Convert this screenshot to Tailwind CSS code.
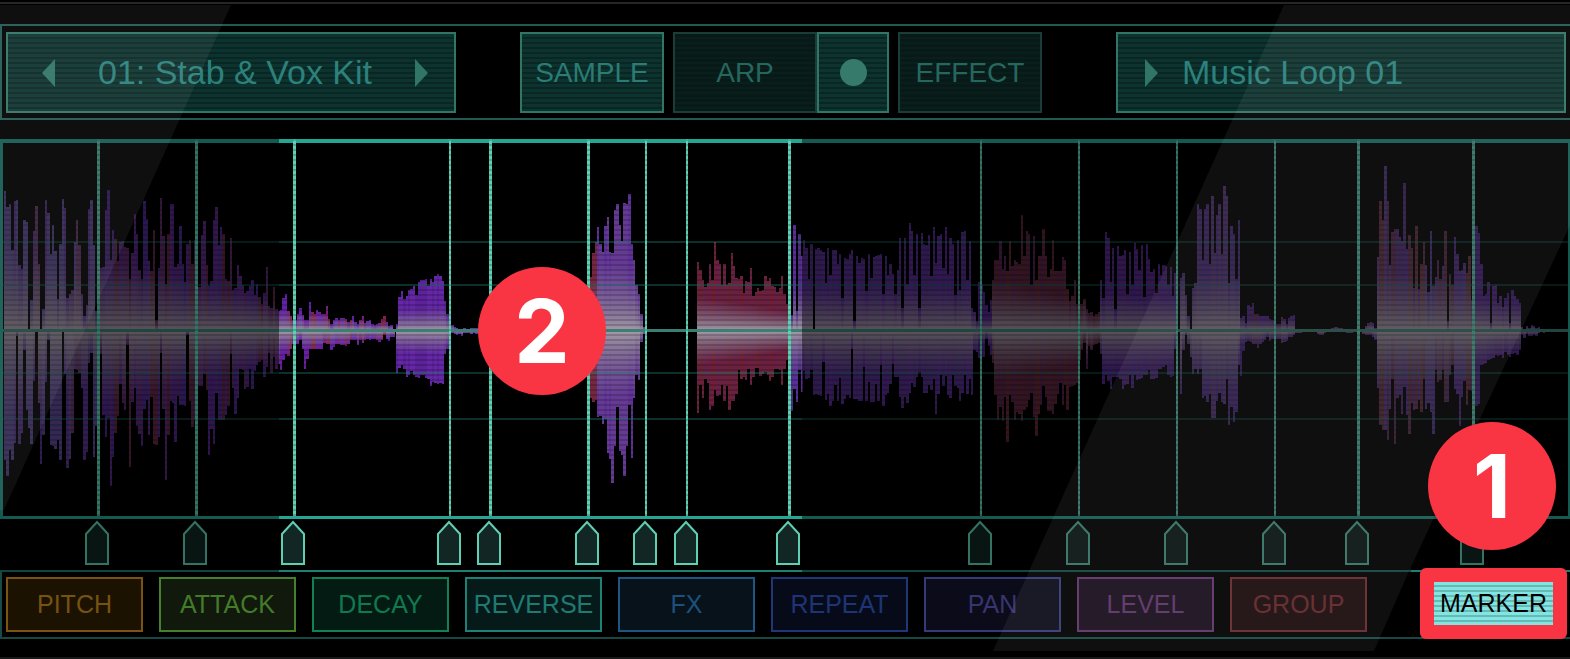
<!DOCTYPE html>
<html lang="en">
<head>
    <meta charset="UTF-8">
    <meta name="viewport" content="width=device-width, initial-scale=1.0">
    <title>Slice Editor</title>
    <script src="https://cdn.jsdelivr.net/npm/@tailwindcss/browser@4"></script>
</head>
<body class="bg-black font-['Liberation_Sans',Arial,sans-serif]">
<main class="relative flex min-h-screen flex-col overflow-hidden bg-black">
    <div class="mt-[2px] h-[2px] bg-[#262626]"></div>

    <!-- Kit, mode and sample selectors -->
    <header class="mt-5 grid grid-cols-[450fr_660fr_450fr] border-y-2 border-l-2 border-[#1f5a54] pt-1.5 pr-1 pb-[5px] pl-1">
        <div class="flex h-[81px] items-center justify-between border-2 border-[#317568] bg-[repeating-linear-gradient(#0d332e_0_3px,#0a2624_3px_5px)] pr-[26px] pl-[34px] text-[34px] text-[#2c817c]">
            <button aria-label="Previous kit"><svg class="h-7 w-[13px] fill-[#317566]" viewBox="0 0 13 28"><path d="M13 0V28L0 14z"/></svg></button>
            <span>01: Stab &amp; Vox Kit</span>
            <button aria-label="Next kit"><svg class="h-7 w-[13px] fill-[#317566]" viewBox="0 0 13 28"><path d="M0 0V28L13 14z"/></svg></button>
        </div>
        <div class="grid h-[81px] grid-cols-[153fr_144fr_81fr_144fr] pr-[74px] pl-16 text-[28px] text-[#2a7c75]">
            <button class="mr-[9px] border-2 border-[#317568] bg-[repeating-linear-gradient(#0d332e_0_3px,#0a2624_3px_5px)]">SAMPLE</button>
            <button class="border-2 border-[#1a3d38] bg-[repeating-linear-gradient(#081917_0_3px,#07201c_3px_5px)] text-[#25675f]">ARP</button>
            <button class="mr-[9px] flex items-center justify-center border-2 border-[#317568] bg-[repeating-linear-gradient(#0d332e_0_3px,#0a2624_3px_5px)]" aria-label="Arp on"><span class="size-[27px] rounded-full bg-[#357a6b]"></span></button>
            <button class="border-2 border-[#1a3d38] bg-[repeating-linear-gradient(#081917_0_3px,#07201c_3px_5px)] text-[#25675f]">EFFECT</button>
        </div>
        <div class="flex h-[81px] items-center gap-6 border-2 border-[#317568] bg-[repeating-linear-gradient(#0d332e_0_3px,#0a2624_3px_5px)] pl-[27px] text-[34px] text-[#2c817c]">
            <button aria-label="Next loop"><svg class="h-7 w-[13px] fill-[#317566]" viewBox="0 0 13 28"><path d="M0 0V28L13 14z"/></svg></button>
            <span>Music Loop 01</span>
        </div>
    </header>

    <!-- Waveform with slice markers -->
    <section class="mt-[19px]">
        <svg class="block h-[433px] w-full" viewBox="0 0 1570 433" preserveAspectRatio="none" role="img" aria-label="Waveform">
            <defs>
                <linearGradient id="fade-up" x1="0" y1="1" x2="0" y2="0">
                    <stop offset="0" stop-color="#a49aa8" stop-opacity="1"/>
                    <stop offset=".35" stop-color="#918699" stop-opacity=".65"/>
                    <stop offset="1" stop-color="#85759a" stop-opacity="0"/>
                </linearGradient>
                <linearGradient id="fade-down" x1="0" y1="0" x2="0" y2="1">
                    <stop offset="0" stop-color="#a49aa8" stop-opacity="1"/>
                    <stop offset=".35" stop-color="#918699" stop-opacity=".65"/>
                    <stop offset="1" stop-color="#85759a" stop-opacity="0"/>
                </linearGradient>
                <pattern id="scan" width="5" height="5" patternUnits="userSpaceOnUse">
                    <rect width="5" height="2" fill="#000" fill-opacity=".18"/>
                </pattern>
            </defs>
            <g id="bars" shape-rendering="crispEdges"></g>
            <rect y="4" width="1570" height="373" fill="url(#scan)"/>
            <g fill="#1f7a6b" fill-opacity=".4">
                <rect y="102" width="1570" height="2"/>
                <rect y="145" width="1570" height="2"/>
                <rect y="233" width="1570" height="2"/>
                <rect y="279" width="1570" height="2"/>
            </g>
            <rect y="190" width="1570" height="3" fill="#3a7f72"/>
            <g fill="#23a794">
                <rect width="1570" height="4"/>
                <rect y="377" width="1570" height="3"/>
                <rect width="3" height="380"/>
                <rect x="1568" width="2" height="380"/>
                <rect y="431" width="1570" height="2" fill="#1e7f75"/>
            </g>
            <g id="markers"></g>
            <rect width="279" height="433" fill="#000" fill-opacity=".45"/>
            <rect x="802" width="768" height="433" fill="#000" fill-opacity=".45"/>
            <rect x="1411" y="431" width="159" height="2" fill="#1e7f75"/>
        </svg>
    </section>

    <!-- Slice parameters -->
    <nav class="grid grid-cols-[repeat(9,137fr)_184fr] gap-4 border-b-2 border-l-2 border-[#174a45] pt-[5px] pr-[3px] pb-[5px] pl-1 text-[25px]">
        <button class="h-[55px] border-2 border-[#7a5410] bg-[#1b1202] text-[#775210]">PITCH</button>
        <button class="h-[55px] border-2 border-[#47802c] bg-[#10190b] text-[#447b2a]">ATTACK</button>
        <button class="h-[55px] border-2 border-[#128055] bg-[#031b13] text-[#117950]">DECAY</button>
        <button class="h-[55px] border-2 border-[#1f8078] bg-[#071a1a] text-[#1e7b74]">REVERSE</button>
        <button class="h-[55px] border-2 border-[#1f5583] bg-[#07121b] text-[#1d507c]">FX</button>
        <button class="h-[55px] border-2 border-[#1f3779] bg-[#070b19] text-[#1d3576]">REPEAT</button>
        <button class="h-[55px] border-2 border-[#363a78] bg-[#0c0b19] text-[#37356f]">PAN</button>
        <button class="h-[55px] border-2 border-[#5d3468] bg-[#180d1c] text-[#5b3265]">LEVEL</button>
        <button class="h-[55px] border-2 border-[#65282b] bg-[#1a0b0c] text-[#602528]">GROUP</button>
        <button class="-mt-[9px] -mb-[7px] ml-[37px] flex items-center justify-center rounded-md bg-[#fa3543] p-3.5 text-black">
            <span class="flex h-[43px] w-full items-center justify-center bg-[repeating-linear-gradient(#82e5e2_0_3px,#67b9b6_3px_5px)]">MARKER</span>
        </button>
    </nav>

    <div class="mt-auto h-[2px] bg-[#191919]"></div>

    <!-- Screen glare -->
    <svg class="pointer-events-none absolute inset-0 h-full w-full fill-white/6" viewBox="0 0 1570 659" preserveAspectRatio="none" aria-hidden="true">
        <path d="M0 5H231L4 510H0z"/>
        <path d="M1284 5H1570V225L1411 567V571H1409L1374 651H993z"/>
    </svg>

    <!-- Step callouts -->
    <div class="absolute top-[267px] left-[478px] flex size-32 items-center justify-center rounded-full bg-[#fa3543] font-['Inter',sans-serif] text-[88px] font-bold text-white">2</div>
    <div class="absolute top-[422px] right-[14px] flex size-32 items-center justify-center rounded-full bg-[#fa3543] font-['Inter',sans-serif] text-[88px] font-bold text-white">1</div>
</main>

<script>
    const MID = 192;
    const STEP = 2.4;

    // x: first bar, glow: reach of the light core at both ends, up/down: bar heights
    const segments = [
        {
            x: 4, glow: [90, 50], colors: ['#5c4a96', '#5c4a96', '#5a3a90', '#5c4a96', '#6a3a6c', '#5a3492'],
            up: '140 124 127 81 130 131 66 62 111 109 1 31 100 125 67 1 22 131 118 77 106 80 32 87 132 123 33 37 41 89 111 86 37 15 26 122 131 86 20 21',
            down: '129 145 119 129 112 5 113 102 19 79 97 113 50 1 72 133 104 51 9 114 115 118 109 129 1 43 137 128 102 38 39 42 57 129 121 32 22 126 95 20'
        },
        {
            x: 100, glow: [75, 30], colors: ['#54288c', '#5e2a6c', '#4c2a8c', '#5c2a84', '#622848'],
            up: '63 64 121 141 71 101 92 70 89 90 84 83 52 78 117 97 61 52 130 112 70 60 101 11 63 133 95 47 97 127 127 64 67 105 67 49 87 91 67 91 67 44 96 110 66 45 50 111 124 86 104 97 52 50 93 41 43 66 55 46 38 40 45 51 36 47 34 27 38 64 25 23 44 22 20',
            down: '23 84 106 87 155 126 102 85 53 72 79 14 136 71 57 95 103 115 78 69 104 66 113 114 106 22 78 149 104 70 72 111 65 74 74 75 4 70 96 89 79 55 55 43 59 124 98 113 62 89 89 89 84 75 23 57 83 67 38 39 58 56 38 58 40 34 31 29 46 36 22 42 26 38 33'
        },
        {
            x: 280, glow: [22, 7], colors: ['#6420a8', '#6a1fa0', '#7a2078', '#84204c', '#6420a8'],
            up: '21 33 37 20 15 11 11 17 23 16 11 11 29 19 17 21 19 17 17 25 12 7 11 13 11 13 13 12 9 11 15 9 7 11 15 8 10 11 7 6 7 8 12 15 9 5 6 2',
            down: '39 29 23 25 18 13 13 13 9 18 38 28 18 18 18 18 18 18 12 13 13 19 16 13 13 14 14 15 13 9 9 9 14 9 12 9 8 9 8 8 9 11 9 4 8 10 6 6'
        },
        {
            x: 396, glow: [22, 26], colors: ['#6427a6', '#5c229a'],
            up: '7 34 40 32 35 41 42 45 36 49 51 51 52 45 52 49 55 57 55 50 30 17 7 6 4 3 2 2 3 2 2 3 3 3 2',
            down: '42 37 34 38 46 44 40 44 46 47 44 44 47 48 55 51 52 53 52 53 23 18 3 2 3 4 3 5 2 2 2 3 2 3 2'
        },
        {x: 590, glow: [50, 50], colors: ['#762740'], up: '54 78 89', down: '67 71 69'},
        {
            x: 597, glow: [70, 60], colors: ['#653a94', '#5f3298', '#653a94'],
            up: '104 87 79 105 114 79 78 121 127 106 90 128 127 137 87 71 46 37 17 4',
            down: '86 85 93 88 122 128 152 115 76 120 124 145 115 74 127 67 44 49 11 3'
        },
        {
            x: 697, glow: [34, 20], colors: ['#6a2238', '#6a2240', '#702036', '#68204a'],
            up: '69 61 51 44 48 67 51 89 71 67 46 67 46 48 78 65 53 52 55 38 50 49 63 35 39 43 40 41 55 50 53 45 44 39 43 55 37 27',
            down: '82 54 67 48 52 79 75 59 65 64 54 70 55 79 70 70 63 39 48 46 49 38 54 46 37 37 45 43 41 44 50 46 38 38 39 54 38 29'
        },
        {
            x: 791, glow: [45, 45], colors: ['#5c2c98', '#523088', '#582a90', '#4e3084'],
            up: '16 106 20 97 75 91 83 52 87 1 82 83 81 79 48 83 56 81 81 67 77 33 73 72 77 81 10 75 68 73 72 40 77 53 74 75 76 77 37 75 56 67 57 37 61 93 23 93 47 108 100 56 97 23 98 87 86 96 55 104 68 95 97 63 104 57 93 87 36 91 41 99 100 51 90 23 19 10',
            down: '80 58 71 39 61 40 48 47 39 64 63 64 65 31 69 63 75 70 54 70 47 73 68 64 67 18 68 68 70 70 36 70 51 71 71 53 70 34 75 64 62 53 33 46 46 66 77 66 72 62 52 56 46 41 46 62 62 54 59 48 83 63 44 55 45 64 67 44 55 57 70 62 44 63 48 64 19 21'
        },
        {x: 978, glow: [14, 14], colors: ['#50268c'], up: '49 47 39 26 19 31', down: '27 26 26 8 15 24'},
        {
            x: 992, glow: [50, 30], colors: ['#5c2638', '#5c2640', '#622834', '#562450'],
            up: '51 71 71 90 62 75 60 90 65 71 69 67 116 75 100 97 46 95 51 75 75 102 75 54 62 91 60 60 60 74 71 42 30 35 51 27 27 27 32 22 18 19 15 17 19',
            down: '32 64 89 76 90 66 111 64 71 89 81 83 90 79 76 69 62 86 105 83 74 55 66 80 80 83 73 63 52 74 54 79 56 55 54 52 29 19 12 38 15 19 14 13 12'
        },
        {
            x: 1100, glow: [40, 34], colors: ['#50288e', '#562a86'],
            up: '51 33 99 93 49 83 22 85 75 76 81 37 79 46 88 82 61 86 34 87 72 59 62 38 67 56 66 65 46 64 35 58',
            down: '23 53 44 50 58 46 46 46 48 58 54 53 44 57 44 49 48 47 44 44 39 48 48 47 38 38 36 34 44 46 45 18'
        },
        {
            x: 1180, glow: [56, 60], colors: ['#5c3a84', '#54348c'],
            up: '53 58 36 15 1 43 48 127 122 71 122 127 67 135 78 116 127 77 145 135 48 105 97 52 111',
            down: '63 19 4 13 26 43 38 43 38 67 65 71 63 87 87 70 62 71 73 48 94 76 91 81 34'
        },
        {
            x: 1240, glow: [13, 10], colors: ['#50288e', '#50288e', '#5c2a60'],
            up: '13 15 8 26 24 28 17 17 15 15 15 15 12 11 15 7 7 14 12 7 13 15 16 1 2 1 1 0 0 0 0 0 0 1 1 1 1 1 3 4 4 3 3 2 1 1 1 0 0 0 0 2 5 8 9 8 3',
            down: '45 20 11 10 11 13 13 17 13 11 9 6 10 8 4 8 8 12 11 10 6 6 4 2 2 2 1 1 0 0 0 0 3 4 4 2 1 0 0 0 0 0 0 1 2 2 2 1 0 0 1 3 4 4 4 6 9'
        },
        {
            x: 1377, glow: [60, 50], colors: ['#683040', '#54388c', '#602c58', '#54307c', '#60304c', '#54308c'],
            up: '74 130 111 165 130 66 99 102 102 94 90 148 82 96 83 43 105 42 67 89 66 39 100 45 54 71 52 65 100 10 57 46 94 77 60 61 68 58 75 31',
            down: '57 94 99 99 109 78 48 113 67 64 83 56 84 103 72 79 78 69 81 48 78 72 81 103 39 51 49 39 71 71 44 34 58 63 95 66 50 74 59 60'
        },
        {
            x: 1473, glow: [34, 20], colors: ['#50288e', '#56288a'],
            up: '67 105 98 67 35 37 49 8 45 46 28 35 24 33 38 8 41 35 32 28 4 1 5 3 6 5 3 4 2 1 2 1 1 0',
            down: '33 75 73 34 33 32 29 28 27 24 25 24 27 21 24 26 23 22 24 19 4 7 3 5 5 4 5 2 1 2 1 1 1 1'
        }
    ];

    let bars = '';
    segments.forEach(function (seg) {
        const up = seg.up.split(' ').map(Number);
        const down = seg.down.split(' ').map(Number);
        up.forEach(function (u, i) {
            const d = down[i];
            const x = (seg.x + i * STEP).toFixed(1);
            const color = seg.colors[(Math.floor(i / 3) * 7 + (i % 4 === 0 ? 1 : 0)) % seg.colors.length];
            const reach = seg.glow[0] + (seg.glow[1] - seg.glow[0]) * i / up.length;
            const gu = Math.min(u, reach);
            const gd = Math.min(d, reach);
            bars += `<rect x="${x}" y="${MID - u}" width="2.4" height="${u + d}" fill="${color}"/>`;
            bars += `<rect x="${x}" y="${MID - gu}" width="2.4" height="${gu}" fill="url(#fade-up)"/>`;
            bars += `<rect x="${x}" y="${MID}" width="2.4" height="${gd}" fill="url(#fade-down)"/>`;
        });
    });
    document.getElementById('bars').innerHTML = bars;

    // [x, line width]
    const markers = [[97, 3], [195, 3], [293, 3], [449, 2], [489, 3], [587, 3], [645, 2], [686, 2], [788, 3],
        [980, 2], [1078, 2], [1176, 2], [1274, 2], [1357, 3], [1472, 3]];
    document.getElementById('markers').innerHTML = markers.map(function ([x, w]) {
        return `<path d="M${x + w / 2} 0V377" stroke="#5fcfb4" stroke-width="${w}"/>
            <path d="M${x + w / 2} 0V377" stroke="#4ba893" stroke-width="${w}" stroke-dasharray="2 3"/>
            <path d="M${x - 11} 425V395L${x} 383L${x + 11} 395V425z" fill="#122724" stroke="#5fcfb4" stroke-width="2"/>`;
    }).join('');
</script>
</body>
</html>
